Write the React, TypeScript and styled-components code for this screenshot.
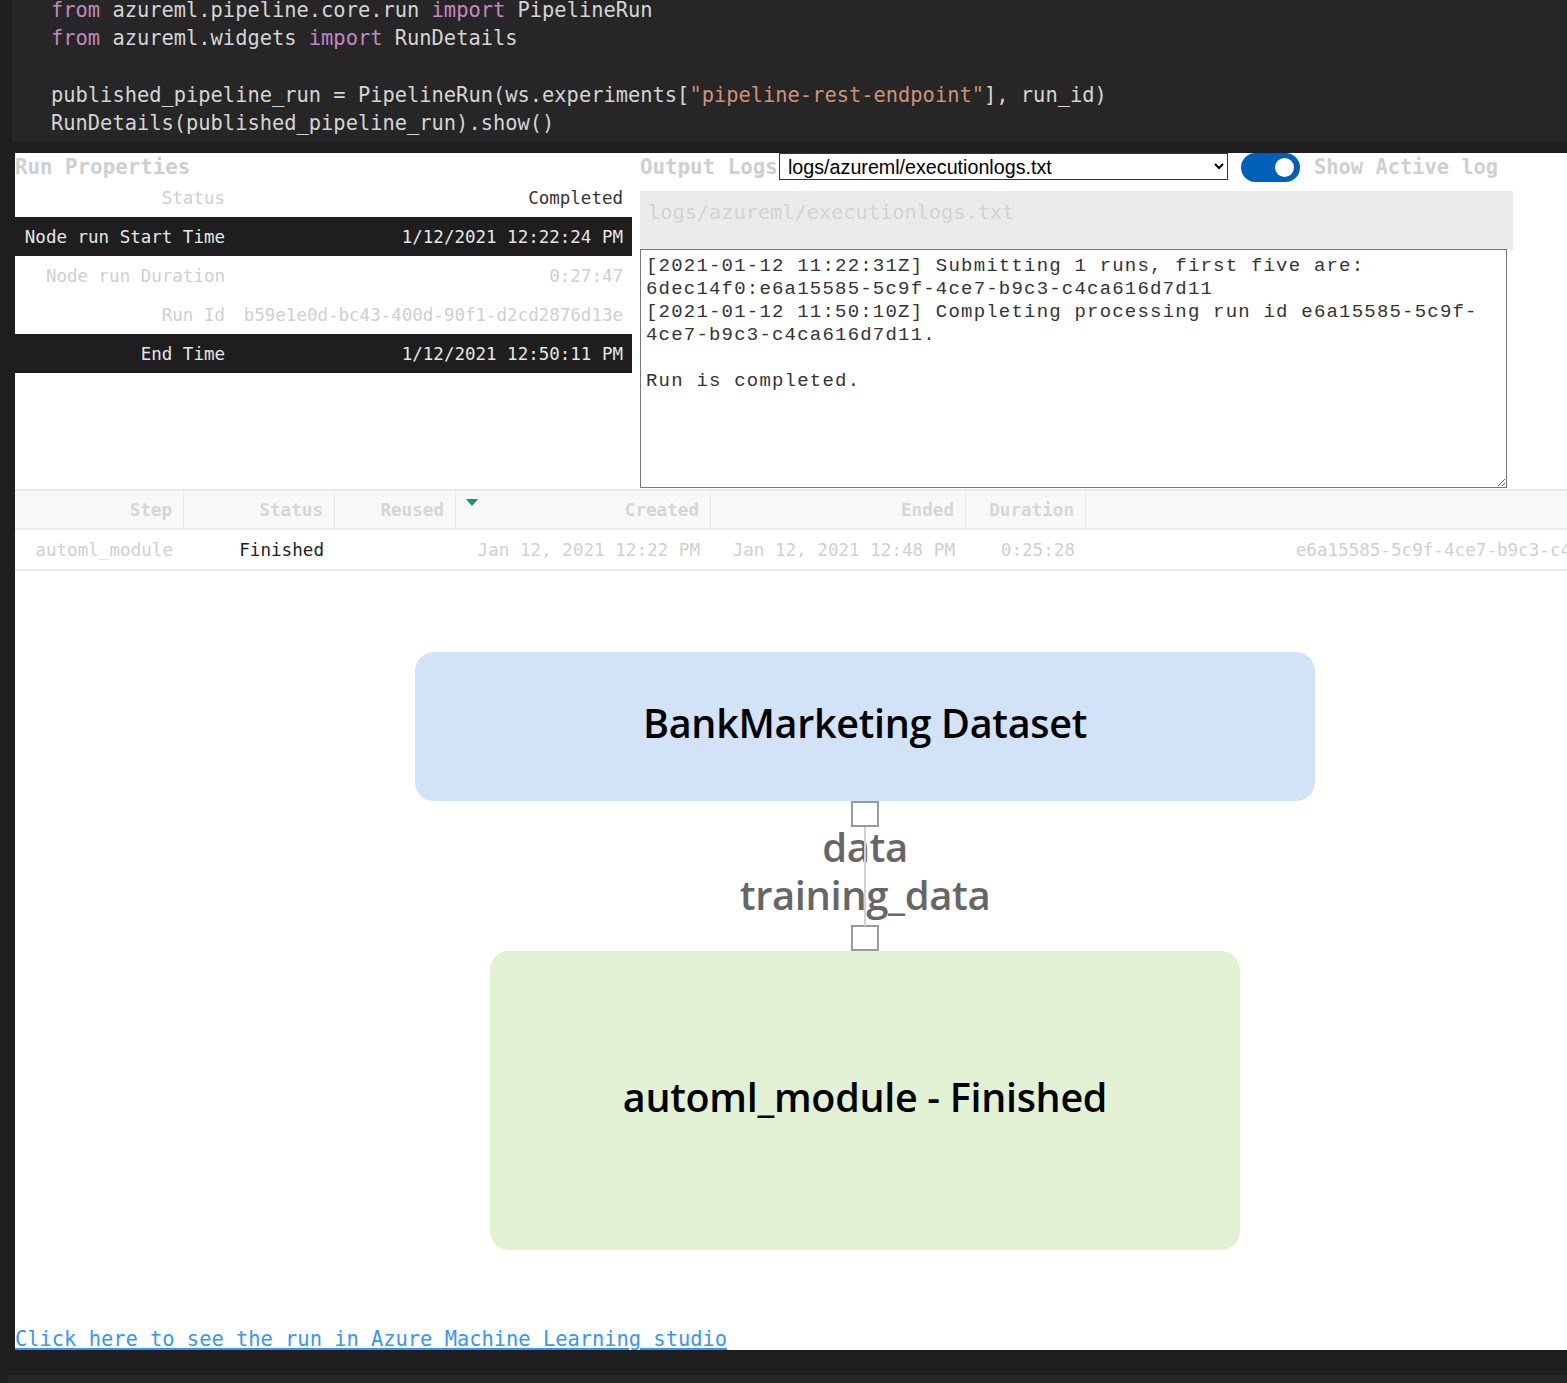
import React from "react";
import styled, { createGlobalStyle } from "styled-components";

const GlobalStyle = createGlobalStyle`
  html, body { margin: 0; padding: 0; background: #1e1e1e; overflow: hidden; }
  * { box-sizing: border-box; }
`;

const MONO = `"DejaVu Sans Mono", "Liberation Mono", monospace`;
const SANS = `"Open Sans", "Noto Sans", "Liberation Sans", sans-serif`;

const Page = styled.div`
  padding-left: 12px;
  width: 1567px;
  overflow: hidden;
`;

const CodeCell = styled.div`
  background: #262626;
  height: 142px;
  padding-left: 39px;
  overflow: hidden;
`;

const CodeLines = styled.pre`
  margin: -4px 0 0 0;
  font-family: ${MONO};
  font-size: 20.4px;
  line-height: 28.3px;
  color: #d4d4d4;
  white-space: pre;
`;

const Kw = styled.span`color: #c586c0;`;
const Str = styled.span`color: #ce9178;`;

const Output = styled.div`
  margin-top: 11px;
  margin-left: 3px;
  background: #ffffff;
  height: 1197px;
  overflow: hidden;
  font-family: ${MONO};
`;

const TopSection = styled.div`
  display: flex;
  gap: 8px;
  height: 336px;
`;

const LeftPanel = styled.div`
  width: 617px;
  flex: none;
`;

const PanelTitle = styled.div`
  font-size: 20.8px;
  font-weight: bold;
  color: #cfcfcf;
  line-height: 25px;
  height: 25px;
  padding-top: 2px;
  white-space: nowrap;
`;

const PropRow = styled.div<{ $dark?: boolean }>`
  display: grid;
  grid-template-columns: 218px 1fr;
  height: 39px;
  align-items: center;
  background: ${(p) => (p.$dark ? "#1e1e1e" : "#ffffff")};
  color: ${(p) => (p.$dark ? "#e6e6e6" : "#cfcfcf")};
  font-size: 17.5px;
  white-space: nowrap;
`;

const PropLabel = styled.div`
  text-align: right;
  padding-right: 8px;
`;

const PropValue = styled.div<{ $strong?: boolean }>`
  text-align: right;
  padding-right: 9px;
  color: ${(p) => (p.$strong ? "#333333" : "inherit")};
`;

const RightPanel = styled.div`
  flex: 1;
  min-width: 0;
`;

const LogHeader = styled.div`
  display: flex;
  align-items: flex-start;
  height: 29px;
`;

const LogTitle = styled(PanelTitle)`
  width: 139px;
  overflow: hidden;
`;

const LogSelect = styled.select`
  width: 449px;
  height: 27px;
  border: 1px solid #333;
  border-radius: 0;
  background: #fff;
  font-family: "Liberation Sans", Arial, sans-serif;
  font-size: 19.7px;
  color: #000;
  padding: 0 4px;
  margin: 0;
`;

const Toggle = styled.div`
  width: 59px;
  height: 29px;
  margin-left: 13px;
  border-radius: 15px;
  background: #005fb8;
  display: flex;
  align-items: center;
  justify-content: flex-end;
  padding-right: 6px;
`;

const Knob = styled.div`
  width: 19px;
  height: 19px;
  border-radius: 50%;
  background: #fff;
`;

const ToggleLabel = styled(PanelTitle)`
  margin-left: 14px;
  font-size: 20.4px;
  line-height: 27px;
  padding-top: 1px;
`;

const LogNameBox = styled.div`
  margin-top: 9px;
  width: 873px;
  height: 59px;
  background: #ebebeb;
  padding: 8px 0 0 8px;
  font-size: 20.3px;
  line-height: 26px;
  color: #d3d3d3;
`;

const LogText = styled.textarea`
  display: block;
  margin-top: -1px;
  width: 867px;
  height: 239px;
  border: 1px solid #767676;
  padding: 5px 5px 4px;
  font-family: "Liberation Mono", monospace;
  font-size: 19px;
  letter-spacing: 1.2px;
  line-height: 23px;
  color: #333;
  background: #fff;
  resize: both;
  outline: none;
`;

const StepsTable = styled.div`
  width: 1700px;
  border-top: 2px solid #e8e8e8;
  border-bottom: 2px solid #e8e8e8;
  font-size: 17.6px;
  white-space: nowrap;
`;

const COLS = "169px 151px 121px 255px 255px 120px 602px";

const HeaderRow = styled.div`
  display: grid;
  grid-template-columns: ${COLS};
  height: 39px;
  background: #f8f8f8;
  border-bottom: 2px solid #ececec;
`;

const HeaderCell = styled.div`
  position: relative;
  display: flex;
  align-items: center;
  justify-content: flex-end;
  padding-right: 11px;
  font-weight: bold;
  color: #d6d6d6;
  border-right: 1px solid #e8e8e8;
  &:last-child { border-right: none; }
`;

const SortArrow = styled.div`
  position: absolute;
  left: 10px;
  top: 8px;
  width: 0;
  height: 0;
  border-left: 6px solid transparent;
  border-right: 6px solid transparent;
  border-top: 7px solid #14946b;
`;

const DataRow = styled.div`
  display: grid;
  grid-template-columns: ${COLS};
  height: 39px;
  background: #fff;
`;

const DataCell = styled.div<{ $strong?: boolean }>`
  display: flex;
  align-items: center;
  justify-content: flex-end;
  padding-right: 11px;
  color: ${(p) => (p.$strong ? "#222" : "#d0d0d0")};
`;

const Graph = styled.div`
  display: flex;
  flex-direction: column;
  align-items: center;
  padding-left: 148px;
  padding-top: 81px;
  font-family: ${SANS};
`;

const Node = styled.div<{ $w: number; $h: number; $bg: string }>`
  width: ${(p) => p.$w}px;
  height: ${(p) => p.$h}px;
  background: ${(p) => p.$bg};
  border-radius: 19px;
  display: flex;
  align-items: center;
  justify-content: center;
  padding-bottom: 8px;
  font-size: 39.5px;
  letter-spacing: -0.3px;
  color: #000;
  font-weight: 600;
`;

const Connector = styled.div`
  position: relative;
  display: flex;
  flex-direction: column;
  align-items: center;
`;

const Port = styled.div`
  width: 28px;
  height: 26px;
  border: 2px solid #9a9a9a;
  background: #fff;
`;

const PortLabel = styled.div`
  font-size: 40px;
  font-weight: 600;
  letter-spacing: -0.4px;
  line-height: 48px;
  color: #666;
  text-align: center;
  white-space: nowrap;
`;

const Labels = styled.div`
  margin-top: -4px;
  padding: 0 0 6px;
`;

const Edge = styled.div`
  position: absolute;
  left: 50%;
  top: 26px;
  bottom: 25px;
  width: 2px;
  margin-left: -1px;
  background: #d2d2d2;
`;

const StudioLink = styled.a`
  display: block;
  margin-top: 77px;
  font-family: ${MONO};
  font-size: 20.4px;
  line-height: 24px;
  color: #3794ff;
  text-decoration: underline;
  white-space: nowrap;
`;

const NextCell = styled.div`
  margin-top: 25px;
  margin-left: -4px;
  height: 20px;
  background: #262626;
`;

export default function App() {
  const logs =
    "[2021-01-12 11:22:31Z] Submitting 1 runs, first five are:\n" +
    "6dec14f0:e6a15585-5c9f-4ce7-b9c3-c4ca616d7d11\n" +
    "[2021-01-12 11:50:10Z] Completing processing run id e6a15585-5c9f-4ce7-b9c3-c4ca616d7d11.\n" +
    "\n" +
    "Run is completed.";

  const props: { label: string; value: string; dark?: boolean; strong?: boolean }[] = [
    { label: "Status", value: "Completed", strong: true },
    { label: "Node run Start Time", value: "1/12/2021 12:22:24 PM", dark: true },
    { label: "Node run Duration", value: "0:27:47" },
    { label: "Run Id", value: "b59e1e0d-bc43-400d-90f1-d2cd2876d13e" },
    { label: "End Time", value: "1/12/2021 12:50:11 PM", dark: true },
  ];

  return (
    <>
      <GlobalStyle />
      <Page>
        <CodeCell>
          <CodeLines>
            <Kw>from</Kw> azureml.pipeline.core.run <Kw>import</Kw> PipelineRun{"\n"}
            <Kw>from</Kw> azureml.widgets <Kw>import</Kw> RunDetails{"\n"}
            {"\n"}
            published_pipeline_run = PipelineRun(ws.experiments[<Str>"pipeline-rest-endpoint"</Str>], run_id){"\n"}
            RunDetails(published_pipeline_run).show()
          </CodeLines>
        </CodeCell>
        <Output>
          <TopSection>
            <LeftPanel>
              <PanelTitle>Run Properties</PanelTitle>
              {props.map((p) => (
                <PropRow key={p.label} $dark={p.dark}>
                  <PropLabel>{p.label}</PropLabel>
                  <PropValue $strong={p.strong}>{p.value}</PropValue>
                </PropRow>
              ))}
            </LeftPanel>
            <RightPanel>
              <LogHeader>
                <LogTitle>Output Logs</LogTitle>
                <LogSelect defaultValue="exec">
                  <option value="exec">logs/azureml/executionlogs.txt</option>
                </LogSelect>
                <Toggle>
                  <Knob />
                </Toggle>
                <ToggleLabel>Show Active log</ToggleLabel>
              </LogHeader>
              <LogNameBox>logs/azureml/executionlogs.txt</LogNameBox>
              <LogText readOnly defaultValue={logs} spellCheck={false} />
            </RightPanel>
          </TopSection>
          <StepsTable>
            <HeaderRow>
              <HeaderCell>Step</HeaderCell>
              <HeaderCell>Status</HeaderCell>
              <HeaderCell>Reused</HeaderCell>
              <HeaderCell>
                <SortArrow />
                Created
              </HeaderCell>
              <HeaderCell>Ended</HeaderCell>
              <HeaderCell>Duration</HeaderCell>
              <HeaderCell />
            </HeaderRow>
            <DataRow>
              <DataCell>automl_module</DataCell>
              <DataCell $strong>Finished</DataCell>
              <DataCell />
              <DataCell>Jan 12, 2021 12:22 PM</DataCell>
              <DataCell>Jan 12, 2021 12:48 PM</DataCell>
              <DataCell>0:25:28</DataCell>
              <DataCell>e6a15585-5c9f-4ce7-b9c3-c4ca616d7d11</DataCell>
            </DataRow>
          </StepsTable>
          <Graph>
            <Node $w={900} $h={149} $bg="#d2e3f8">BankMarketing Dataset</Node>
            <Connector>
              <Port />
              <Labels>
                <PortLabel>data</PortLabel>
                <PortLabel>training_data</PortLabel>
              </Labels>
              <Port />
              <Edge />
            </Connector>
            <Node $w={750} $h={299} $bg="#e2f0d4">automl_module - Finished</Node>
          </Graph>
          <StudioLink href="#">Click here to see the run in Azure Machine Learning studio</StudioLink>
        </Output>
        <NextCell />
      </Page>
    </>
  );
}
